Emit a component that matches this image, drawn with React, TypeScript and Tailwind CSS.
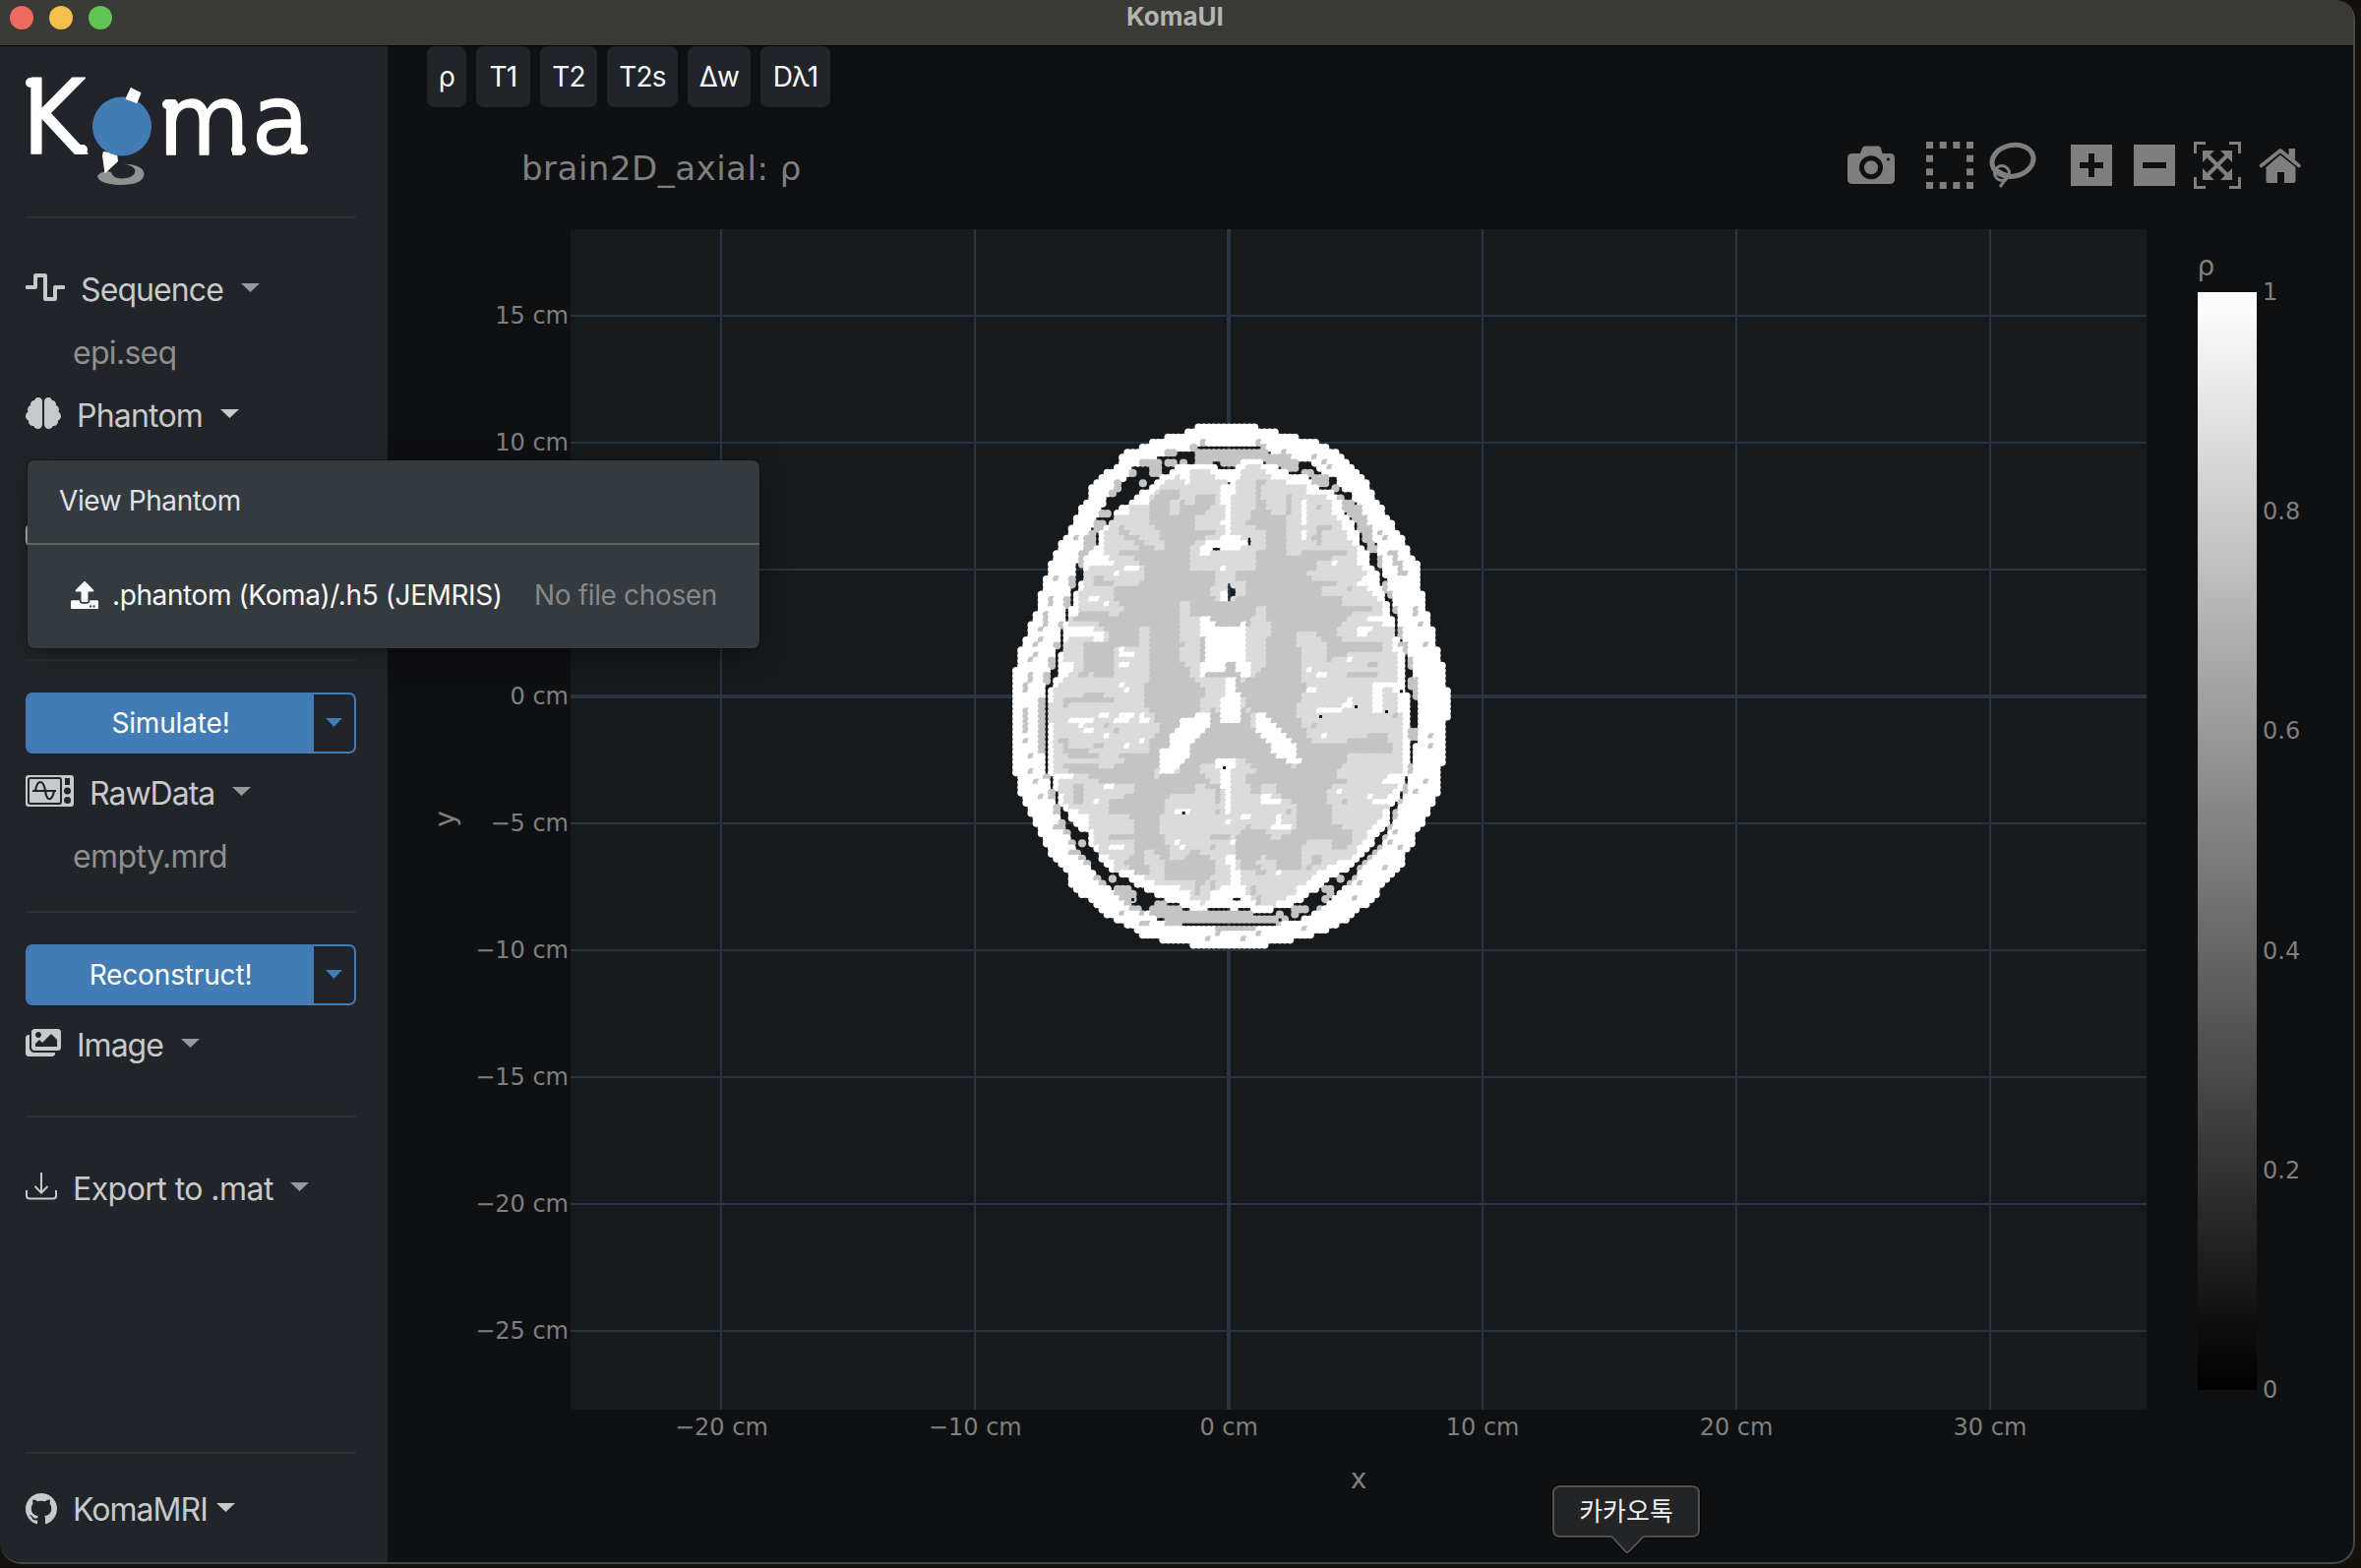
import React from "react";
import { FaBrain, FaImages, FaUpload, FaWaveSquare } from "react-icons/fa";
import { BsGithub } from "react-icons/bs";

type Pt = [number, number];
type Shape = { tone: number; pts?: Pt[]; rects?: number[][] };

const parse = (s: string): Pt[] =>
  s.trim().split(/\s+/).map((p) => p.split(",").map(Number) as Pt);

const DARK = 0;
const WHITE = 1;
const GREY = 2;
const LIGHT = 3;
const TONES = ["none", "#ffffff", "#c4c4c4", "#dbdbdb"];

/* Tissue map, later shapes override earlier ones. */
const SHAPES: Shape[] = [
  {
    tone: WHITE,
    pts: parse(`646,63 836,63 838,78 898,80 900,95 960,95 962,110 1005,110 1030,125 1035,128 1060,140 1083,158 1113,185 1145,217 1175,250 1190,280 1207,310 1222,345 1252,375 1254,390 1268,404 1283,420 1300,455 1302,468 1330,500 1332,570 1347,576 1349,635 1362,640 1364,685 1378,688 1380,745 1392,748 1395,790 1410,795 1410,868 1424,870 1424,962 1410,965 1408,1098 1395,1100 1393,1180 1378,1190 1376,1212 1362,1225 1345,1265 1332,1290 1316,1300 1315,1345 1285,1368 1284,1395 1260,1420 1237,1440 1236,1460 1205,1475 1205,1492 1170,1525 1130,1560 1085,1590 1050,1605 1020,1616 990,1630 945,1632 945,1646 867,1648 867,1662 632,1662 630,1646 538,1646 535,1632 490,1630 460,1612 455,1600 410,1580 365,1553 360,1540 305,1505 275,1475 258,1456 258,1432 240,1415 210,1385 195,1370 195,1352 180,1340 178,1322 165,1318 163,1292 150,1285 150,1260 135,1255 133,1228 118,1225 118,1200 103,1195 103,1135 88,1130 88,808 103,805 103,748 118,745 118,715 134,712 136,670 150,668 150,640 165,638 165,578 180,575 181,532 196,528 197,485 212,482 212,452 228,450 230,420 258,405 260,375 275,372 288,342 290,315 320,300 322,265 350,240 380,210 412,180 430,158 445,142 475,140 477,127 505,125 507,110 552,108 554,95 612,94 614,79 646,78`),
  },
  {
    tone: DARK,
    pts: parse(`655,132 840,132 848,148 910,155 915,165 970,170 1020,190 1035,212 1075,228 1085,245 1115,268 1130,290 1155,315 1175,360 1187,390 1197,430 1207,460 1215,495 1228,540 1240,570 1250,600 1262,640 1272,690 1282,740 1302,765 1310,800 1310,850 1326,870 1326,1030 1310,1050 1308,1110 1296,1150 1280,1210 1265,1250 1250,1290 1235,1325 1215,1355 1190,1390 1160,1420 1130,1450 1100,1475 1060,1515 1020,1545 990,1570 940,1580 895,1598 600,1598 565,1582 530,1580 500,1555 455,1535 400,1495 370,1470 340,1440 300,1395 270,1355 248,1310 225,1260 213,1215 200,1165 185,1130 182,1070 165,1070 165,900 185,895 188,845 205,790 218,740 233,690 246,640 255,590 262,540 280,500 295,460 310,430 320,400 335,360 350,330 375,290 400,250 440,220 450,195 490,180 540,160 590,147 640,145`),
  },
  {
    tone: GREY,
    pts: parse(`650,140 842,140 880,155 940,165 960,185 955,205 925,205 895,190 850,178 785,178 770,190 740,190 700,175 690,190 655,190 645,172`),
  },
  { tone: GREY, pts: parse(`1095,295 1150,310 1170,345 1187,390 1202,455 1175,455 1155,400 1125,350 1095,330`) },
  { tone: GREY, pts: parse(`320,385 345,395 345,430 325,460 315,490 285,505 298,455`) },
  {
    tone: GREY,
    pts: parse(`530,1526 600,1530 620,1552 820,1552 830,1568 890,1568 900,1552 930,1580 905,1600 890,1582 600,1582 600,1600 560,1598 555,1570 510,1558 505,1540`),
  },
  { tone: GREY, pts: parse(`395,1478 430,1472 450,1490 470,1510 450,1530 490,1548 490,1566 460,1550 420,1520`) },
  {
    tone: GREY,
    rects: [
      [165, 905, 17, 165], [118, 935, 15, 75], [118, 1025, 15, 18], [258, 530, 20, 38], [245, 595, 18, 30], [228, 670, 15, 18],
      [212, 732, 15, 16], [197, 780, 18, 32], [182, 828, 17, 24], [135, 828, 15, 28], [118, 850, 15, 38], [150, 765, 15, 15],
      [135, 780, 15, 15], [150, 735, 15, 15], [165, 718, 15, 15], [165, 685, 15, 15], [180, 645, 15, 45], [195, 596, 15, 28],
      [212, 532, 15, 16], [275, 408, 14, 15], [505, 190, 38, 32], [550, 148, 38, 16], [552, 172, 34, 18], [600, 174, 18, 15],
      [475, 180, 60, 12], [475, 236, 15, 15], [400, 240, 16, 28], [384, 265, 15, 20], [444, 198, 16, 26], [350, 322, 30, 24],
      [332, 358, 34, 30], [630, 130, 18, 16], [660, 115, 15, 14], [833, 115, 16, 14], [848, 130, 14, 14], [906, 148, 14, 14],
      [1002, 160, 14, 16], [1035, 176, 14, 16], [1048, 190, 14, 16], [970, 205, 36, 16], [1000, 220, 52, 30], [1064, 250, 18, 24],
      [1080, 282, 18, 20], [1205, 395, 14, 16], [1220, 410, 14, 14], [1233, 456, 30, 14], [1250, 472, 14, 32], [1266, 490, 14, 36],
      [1280, 518, 14, 14], [1202, 468, 14, 34], [1220, 545, 14, 28], [1233, 575, 14, 20], [1250, 622, 14, 22], [1265, 686, 14, 32],
      [1268, 732, 24, 26], [1310, 625, 15, 32], [1326, 670, 15, 16], [1342, 733, 15, 16], [1296, 785, 14, 20], [1295, 845, 25, 30],
      [1310, 870, 15, 32], [1295, 1000, 30, 30], [1295, 1102, 15, 30], [1280, 1160, 15, 30], [1265, 1205, 14, 18], [1250, 1235, 14, 30],
      [1358, 1012, 14, 16], [1358, 1044, 14, 14], [1342, 1150, 14, 16], [1310, 1183, 14, 14], [1234, 1285, 14, 20], [1204, 1290, 15, 16],
      [1250, 1306, 14, 14], [1234, 1336, 14, 14], [1218, 1320, 14, 20], [1204, 1350, 20, 14], [1264, 1352, 15, 15], [1188, 1366, 14, 16],
      [1172, 1382, 14, 14], [1157, 1398, 15, 14], [1142, 1412, 14, 15], [1127, 1445, 15, 20], [1142, 1460, 15, 15], [1080, 1442, 18, 15],
      [1035, 1475, 32, 20], [1110, 1458, 16, 16], [1050, 1490, 18, 16], [1035, 1505, 16, 16], [1020, 1535, 15, 16], [1218, 1415, 14, 15],
      [1126, 1505, 14, 15], [970, 1598, 15, 15], [940, 1538, 50, 16], [945, 1552, 16, 16], [182, 1132, 16, 16], [197, 1178, 15, 26],
      [213, 1226, 18, 28], [228, 1268, 20, 26], [212, 1290, 28, 15], [243, 1306, 15, 20], [258, 1332, 20, 22], [290, 1332, 20, 18],
      [262, 1368, 30, 14], [290, 1382, 20, 18], [305, 1398, 18, 16], [337, 1440, 18, 20], [352, 1458, 18, 15], [382, 1440, 18, 16],
      [415, 1470, 20, 20], [135, 1074, 15, 15], [135, 1122, 15, 14], [150, 1152, 15, 15], [165, 1198, 15, 15], [412, 1555, 15, 14],
      [475, 1586, 30, 14], [708, 1592, 120, 22], [708, 1612, 15, 15], [832, 1614, 15, 15], [678, 1630, 14, 16], [785, 1630, 14, 16],
      [120, 965, 12, 30],
    ],
  },
  {
    tone: WHITE,
    pts: parse(`585,187 650,182 660,196 700,190 730,212 770,212 782,178 850,178 860,192 890,195 910,212 955,215 985,225 1000,245 1025,262 1060,270 1095,305 1100,340 1125,375 1145,405 1150,440 1170,460 1180,490 1197,520 1210,560 1225,605 1240,645 1252,690 1267,740 1283,765 1285,880 1300,900 1298,980 1298,1090 1283,1150 1268,1195 1240,1235 1236,1270 1215,1300 1180,1345 1145,1385 1120,1410 1080,1435 1040,1455 1010,1485 970,1510 935,1535 860,1545 820,1553 775,1553 775,1538 750,1538 683,1538 680,1553 630,1553 620,1535 595,1535 570,1520 540,1505 500,1490 460,1462 430,1440 390,1425 360,1390 330,1350 315,1305 285,1290 260,1255 240,1235 225,1185 210,1140 200,1100 198,880 228,830 228,765 245,755 247,690 260,650 270,625 288,570 305,540 305,500 320,465 350,430 352,395 382,370 398,345 428,315 470,285 500,262 520,240 555,220 575,205`),
  },
  {
    tone: LIGHT,
    pts: parse(`630,200 690,200 700,225 738,235 722,265 722,300 738,330 738,350 722,362 738,385 738,400 700,430 675,428 662,440 662,468 690,460 705,452 752,455 770,450 785,432 800,430 785,405 752,400 752,285 768,275 770,240 785,225 785,205 820,190 850,192 875,220 900,240 950,250 985,255 985,280 1010,285 1045,285 1062,310 1062,330 1095,360 1095,380 1110,405 1140,440 1140,480 1170,515 1160,540 1145,550 1200,590 1215,620 1215,645 1175,660 1190,675 1250,680 1250,755 1265,770 1268,855 1190,860 1190,930 1205,940 1220,870 1255,870 1265,930 1280,960 1280,1130 1235,1140 1220,1155 1265,1175 1250,1200 1205,1210 1230,1235 1220,1270 1190,1290 1175,1320 1130,1380 1110,1400 1065,1405 1045,1430 1020,1430 1010,1450 960,1480 945,1465 960,1500 930,1510 880,1540 820,1520 800,1480 770,1430 765,1390 740,1400 755,1425 750,1475 720,1490 680,1530 630,1525 625,1485 580,1480 540,1480 500,1455 480,1435 430,1430 400,1425 390,1390 360,1375 340,1340 320,1260 260,1230 230,1180 225,1150 270,1148 270,1135 215,1135 212,1000 200,960 215,880 245,855 270,830 270,800 245,780 245,755 262,720 262,710 320,710 350,735 380,720 340,690 270,680 262,660 290,645 290,600 305,570 305,540 320,505 395,500 395,480 370,465 370,400 395,350 440,345 445,315 500,310 520,280 555,245 600,225 615,240 640,268 628,235`),
  },
  {
    tone: GREY,
    pts: parse(`537,275 598,270 600,300 650,318 645,290 700,290 705,312 660,345 645,350 645,392 705,395 705,408 655,420 632,450 630,500 650,518 708,518 708,545 692,570 692,590 722,612 770,600 800,580 800,550 770,545 768,518 830,515 832,458 862,450 862,400 830,380 800,375 815,345 830,320 832,240 860,240 848,265 848,310 880,345 922,342 924,288 938,288 940,340 925,365 925,468 955,468 985,455 1110,457 1110,470 1020,480 1030,500 990,515 985,530 1030,545 1080,540 1080,560 1035,565 1035,590 1095,595 1100,625 1185,627 1185,642 1125,642 1095,670 1080,700 1110,735 1215,737 1215,757 1120,757 1110,770 1060,790 1048,790 1045,725 1020,720 1015,695 955,695 955,710 972,770 970,810 985,870 970,905 955,955 985,1000 1005,1040 1090,1045 1125,1030 1240,1000 1245,1070 1120,1065 1110,1090 1080,1120 1080,1145 1110,1150 1115,1157 1070,1160 1050,1190 1060,1240 1062,1290 1125,1300 1130,1330 1110,1360 1080,1370 1040,1330 1000,1330 970,1360 965,1430 900,1425 880,1395 850,1385 835,1410 870,1440 860,1470 830,1430 790,1420 770,1390 775,1330 790,1300 830,1270 850,1300 880,1300 850,1230 820,1180 790,1130 830,1130 800,1090 660,1105 660,1130 720,1170 720,1240 700,1180 650,1160 640,1200 570,1190 550,1240 540,1290 560,1350 610,1400 640,1360 700,1390 710,1440 680,1455 660,1500 640,1500 660,1455 555,1458 550,1400 520,1370 490,1370 505,1435 470,1440 430,1410 470,1350 455,1310 475,1270 380,1255 385,1215 460,1210 460,1165 340,1155 330,1142 270,1130 240,1115 245,1100 400,1115 430,1095 415,1075 500,1070 510,1040 535,1010 530,960 490,920 505,840 505,690 475,690 475,740 455,745 380,735 380,700 370,680 275,665 275,655 410,655 425,630 400,600 395,570 440,565 490,550 505,510 485,500 480,480 415,467 415,455 530,455 550,450 550,420 500,350 510,345 510,300`),
  },
  {
    tone: GREY,
    rects: [
      [412, 378, 22, 18], [420, 392, 34, 20], [438, 408, 34, 18], [455, 420, 34, 20], [470, 438, 50, 16], [1016, 375, 44, 14],
      [1016, 390, 16, 46], [1002, 406, 20, 15], [1016, 315, 16, 16], [335, 530, 32, 30], [365, 545, 30, 16], [305, 738, 92, 92],
      [290, 825, 30, 16], [258, 905, 138, 16], [245, 895, 18, 42], [310, 888, 60, 16], [340, 820, 60, 22], [245, 1045, 16, 30],
      [245, 1060, 72, 15], [260, 1075, 90, 18], [228, 1028, 30, 18], [275, 1168, 28, 56], [380, 1322, 78, 15], [430, 1200, 60, 60],
      [1110, 825, 92, 16], [1170, 795, 36, 15], [335, 1044, 30, 15], [370, 985, 14, 15], [398, 998, 14, 14], [1250, 948, 14, 15],
      [1002, 980, 14, 16], [1095, 1215, 14, 14], [708, 1245, 14, 14], [925, 1245, 14, 14], [678, 320, 16, 14], [680, 285, 26, 15],
      [415, 455, 70, 15], [290, 638, 90, 30], [695, 1320, 60, 15], [690, 1350, 22, 15], [815, 1480, 14, 30], [830, 1510, 14, 28],
      [1010, 1380, 20, 28], [985, 1405, 18, 20], [1110, 565, 14, 14], [700, 1460, 14, 30], [645, 1475, 14, 30], [845, 300, 14, 20],
    ],
  },
  {
    tone: LIGHT,
    pts: parse(`598,612 630,612 640,655 660,660 660,840 735,835 740,870 735,890 722,920 722,945 700,930 690,960 660,960 660,935 675,880 665,855 640,840 630,810 600,790 598,770 615,740 598,720`),
  },
  {
    tone: LIGHT,
    pts: parse(`845,615 862,615 862,650 878,690 862,740 862,790 845,830 800,845 785,870 800,930 845,960 830,1000 820,990 815,960 785,930 785,840 800,700 830,650`),
  },
  {
    tone: LIGHT,
    pts: parse(`845,1168 895,1172 910,1205 955,1230 955,1290 940,1325 880,1328 850,1300 815,1295 800,1280 830,1255 815,1225 820,1195 845,1190`),
  },
  {
    tone: LIGHT,
    rects: [
      [568, 302, 30, 42], [708, 545, 60, 40], [768, 565, 30, 28], [522, 1120, 16, 26], [585, 1110, 16, 22], [940, 1095, 16, 16],
      [815, 960, 15, 40], [660, 950, 30, 30], [830, 1445, 60, 30], [640, 1340, 24, 30], [565, 1300, 45, 100], [1010, 1330, 50, 40],
      [870, 1390, 26, 30], [475, 700, 26, 100],
    ],
  },
  { tone: GREY, rects: [[925, 1245, 14, 14]] },
  {
    tone: WHITE,
    pts: parse(`660,655 690,660 710,680 740,690 770,685 800,672 800,780 815,800 815,840 785,840 770,800 735,800 735,830 700,825 665,840 660,810 675,790 680,720 660,700`),
  },
  { tone: WHITE, pts: parse(`738,840 768,840 770,870 785,900 785,980 722,980 722,920 738,890`) },
  { tone: WHITE, pts: parse(`600,965 630,965 650,955 690,950 690,985 675,1010 630,1045 630,1075 600,1110 585,1135 538,1135 538,1065 568,1050 570,1020 600,980`) },
  { tone: WHITE, pts: parse(`830,950 860,950 955,1045 970,1105 930,1100 890,1070 860,1030 830,1000`) },
  {
    tone: WHITE,
    rects: [
      [430, 500, 45, 18], [398, 515, 16, 15], [320, 594, 30, 16], [367, 610, 16, 15], [970, 300, 15, 75], [970, 390, 15, 34],
      [1064, 488, 15, 15], [722, 500, 15, 16], [722, 578, 18, 30], [245, 688, 78, 14], [320, 703, 30, 16], [350, 716, 16, 16],
      [413, 748, 15, 26], [428, 764, 30, 14], [413, 795, 30, 14], [1142, 685, 42, 22], [1142, 700, 28, 18], [1172, 656, 76, 14],
      [1110, 780, 15, 15], [985, 812, 15, 14], [1018, 826, 28, 14], [413, 858, 15, 15], [428, 874, 16, 14], [985, 874, 30, 14],
      [1203, 870, 15, 72], [1188, 935, 30, 14], [1018, 935, 80, 15], [1095, 920, 28, 15], [1110, 905, 14, 16], [258, 965, 78, 15],
      [290, 980, 16, 15], [305, 996, 30, 15], [352, 942, 28, 15], [398, 965, 44, 15], [413, 950, 46, 15], [475, 950, 16, 30],
      [490, 965, 15, 15], [365, 1012, 15, 15], [475, 1027, 15, 15], [428, 1042, 15, 15], [1033, 1014, 14, 15], [210, 1135, 62, 15],
      [367, 1168, 30, 15], [337, 1212, 14, 16], [722, 1105, 30, 78], [738, 1170, 15, 90], [708, 1090, 60, 26], [738, 1275, 15, 15],
      [752, 1335, 15, 18], [738, 1385, 30, 15], [752, 1398, 15, 18], [752, 1430, 30, 45], [722, 1475, 78, 18], [845, 1198, 30, 30],
      [875, 1213, 30, 18], [890, 1262, 15, 34], [878, 1294, 62, 15], [785, 1258, 30, 16], [583, 1243, 46, 15],
      [583, 1338, 16, 15], [598, 1352, 15, 15], [383, 1352, 44, 15], [1078, 1183, 14, 15], [1172, 1198, 20, 16], [1188, 1212, 30, 16],
      [892, 1430, 15, 15], [568, 1480, 40, 30], [690, 1490, 110, 60], [660, 435, 30, 30], [738, 405, 45, 40],
    ],
  },
  {
    tone: DARK,
    rects: [
      [742, 237, 14, 14], [804, 412, 12, 22], [697, 438, 24, 14], [742, 548, 14, 58], [755, 563, 14, 26], [762, 1498, 22, 18],
      [683, 1536, 66, 15], [776, 1536, 40, 15], [605, 1536, 22, 15], [574, 1520, 22, 14],
    ],
  },
];

const VOXEL_DOTS: Pt[] = [[1135, 925], [1027, 955], [1228, 940], [733, 1111], [609, 1249], [903, 1575], [454, 1513], [1273, 878]];

const inside = (x: number, y: number, pts: Pt[]) => {
  let hit = false;
  for (let i = 0, j = pts.length - 1; i < pts.length; j = i++) {
    const [xi, yi] = pts[i];
    const [xj, yj] = pts[j];
    if (yi > y !== yj > y && x < ((xj - xi) * (y - yi)) / (yj - yi) + xi) hit = !hit;
  }
  return hit;
};

const STEP_X = 15.45;
const STEP_Y = 15.47;

const buildRuns = () => {
  const runs: { d: string; tone: number }[] = [];
  for (let r = 0; r < 103; r++) {
    const y = 73.5 + r * STEP_Y;
    let start = 0;
    let last = -1;
    for (let c = 0; c <= 86; c++) {
      const x = 99.2 + c * STEP_X;
      let tone = 0;
      if (c < 86) {
        for (const s of SHAPES) {
          if (s.pts && inside(x, y, s.pts)) tone = s.tone;
          if (s.rects && s.rects.some(([rx, ry, w, h]) => x >= rx && x < rx + w && y >= ry && y < ry + h)) tone = s.tone;
        }
      }
      if (tone !== last) {
        if (last > 0) {
          const len = (c - 1 - start) * STEP_X + 0.2;
          runs.push({ d: `M${(99.2 + start * STEP_X).toFixed(2)} ${y.toFixed(2)}h${len.toFixed(2)}`, tone: last });
        }
        start = c;
        last = tone;
      }
    }
  }
  return runs;
};

const RUNS = buildRuns();

const Brain = () => (
  <g transform="translate(1000 410) scale(0.33333)">
    {RUNS.map((r, i) => (
      <path key={i} d={r.d} stroke={TONES[r.tone]} strokeWidth={24.5} strokeLinecap="round" strokeDasharray="0 15.45" fill="none" />
    ))}
    {VOXEL_DOTS.map(([x, y]) => (
      <rect key={`${x}-${y}`} x={x - 4} y={y - 4} width={9} height={9} fill="#161a1d" />
    ))}
  </g>
);

const X_TICKS = [-20, -10, 0, 10, 20, 30];
const Y_TICKS = [15, 10, 5, 0, -5, -10, -15, -20, -25];
const label = (n: number) => `${n < 0 ? "−" : ""}${Math.abs(n)} cm`;

const Plot = () => (
  <svg viewBox="395 220 1997 1367" width={1997} height={1367} className="block shrink-0" fontFamily="'DejaVu Sans', Verdana, sans-serif" fontSize={24} fill="#7f7f7f">
    <defs>
      <linearGradient id="scale" x1="0" y1="0" x2="0" y2="1">
        <stop offset="0" stopColor="#fff" />
        <stop offset="1" stopColor="#000" />
      </linearGradient>
    </defs>
    <rect x={580} y={233} width={1602} height={1200} fill="#161a1d" />
    {X_TICKS.map((t) => (
      <rect key={t} x={Math.round(1249.2 + t * 25.79) - (t === 0 ? 2 : 1)} y={233} width={t === 0 ? 4 : 2} height={1200} fill="#283442" />
    ))}
    {Y_TICKS.map((t) => (
      <rect key={t} x={580} y={Math.round(708 - t * 25.78) - (t === 0 ? 2 : 1)} width={1602} height={t === 0 ? 4 : 2} fill="#283442" />
    ))}
    {X_TICKS.map((t) => (
      <text key={t} x={1249.2 + t * 25.79} y={1458.5} textAnchor="middle">{label(t)}</text>
    ))}
    {Y_TICKS.map((t) => (
      <text key={t} x={578} y={716 - t * 25.78} textAnchor="end">{label(t)}</text>
    ))}
    <text x={1381} y={1513} textAnchor="middle" fontSize={28}>x</text>
    <text transform="translate(462 832.5) rotate(-90)" textAnchor="middle" fontSize={28}>y</text>
    <Brain />
    <rect x={2234} y={297} width={60} height={1116} fill="url(#scale)" />
    <text x={2233.5} y={280} fontSize={28}>ρ</text>
    {[1, 0.8, 0.6, 0.4, 0.2, 0].map((v) => (
      <text key={v} x={2300} y={1421 - v * 1116}>{v}</text>
    ))}
  </svg>
);

const box = "block h-12 w-12";

const ModeBar = () => (
  <div className="flex gap-8 text-[#7f7f7f]">
    <svg className={box} viewBox="0 0 48 48">
      <path fill="currentColor" fillRule="evenodd" d="M5 12h8l2-5.500q1-2 3-2h13q2 0 3 2l1.500 5.500H43q5 0 5 5v21q0 5-5 5H5q-5 0-5-5V17q0-5 5-5ZM24 14.300a12 12 0 1 0 0 24a12 12 0 1 0 0-24ZM41.400 16.300a1.600 1.600 0 1 0 0 3.200a1.600 1.600 0 1 0 0-3.200Z" />
      <circle cx={24} cy={26.300} r={7} fill="currentColor" />
    </svg>
    <div className="flex gap-4">
      <svg className={box} viewBox="0 0 48 48" fill="currentColor">
        {[0, 13.700, 27.300, 41].map((x) =>
          [0, 13.700, 27.300, 41].map((y) => (x % 41 === 0 || y % 41 === 0 ? <rect key={`${x}-${y}`} x={x} y={y} width={7} height={7} /> : null)),
        )}
      </svg>
      <svg className={box} viewBox="0 0 48 48" fill="none" stroke="currentColor">
        <ellipse cx={24} cy={19.300} rx={21.200} ry={15.800} strokeWidth={5} transform="rotate(-12 24 19.300)" />
        <circle cx={13} cy={32} r={7.500} strokeWidth={3} />
        <path d="M6 27q6 5 14 7q-3 4-9 12" strokeWidth={3} />
      </svg>
    </div>
    <div className="flex gap-4">
      <svg className={box} viewBox="0 0 48 48">
        <path fill="currentColor" fillRule="evenodd" d="M3 3h42v42H3ZM12 21v6h9v9h6v-9h9v-6h-9v-9h-6v9Z" />
      </svg>
      <svg className={box} viewBox="0 0 48 48">
        <path fill="currentColor" fillRule="evenodd" d="M3 3h42v42H3ZM12 21v6h24v-6Z" />
      </svg>
      <svg className={box} viewBox="0 0 48 48">
        <path fill="none" stroke="currentColor" strokeWidth={3} d="M1.500 12V1.500H12M36 1.500H46.500V12M46.500 36V46.500H36M12 46.500H1.500V36" />
        <path stroke="currentColor" strokeWidth={4} d="M13 13L35 35M35 13L13 35" />
        <path fill="currentColor" d="M9 9h12L9 21ZM39 9v12L27 9ZM39 39H27L39 27ZM9 39V27L21 39Z" />
      </svg>
      <svg className={box} viewBox="0 0 48 48">
        <path fill="none" stroke="currentColor" strokeWidth={3.600} strokeLinecap="round" strokeLinejoin="round" d="M4.500 24.500L24 9L43 24.500" />
        <path fill="currentColor" d="M24 13.500L39.500 26v14q0 2-2 2h-9.500V31h-7v11h-9.500q-2 0-2-2V26ZM32.500 7h6.500v12l-6.500-5Z" />
      </svg>
    </div>
  </div>
);

const Caret = ({ className }: { className: string }) => (
  <svg className={`block h-[9px] ${className}`} viewBox="0 0 19 9" preserveAspectRatio="none">
    <path d="M0 0h19L9.500 9Z" fill="currentColor" />
  </svg>
);

const Rule = () => <div className="h-0.5 w-[336px] shrink-0 bg-[#2d2e31]" />;

const Row = ({ icon, text, caretGap = "ml-[18px]", tracking, bright }: { icon: React.ReactNode; text: string; caretGap?: string; tracking: string; bright?: boolean }) => (
  <div className="flex h-16 shrink-0 items-center text-[32px] leading-[64px] text-[#c8c9ca]">
    {icon}
    <span className={`mt-[2px] ml-4 whitespace-nowrap ${tracking}`}>{text}</span>
    <Caret className={`w-[19px] ${caretGap} -mt-[3px] ${bright ? "text-[#c8c9ca]" : "text-[#97999b]"}`} />
  </div>
);

const FileName = ({ text, tracking }: { text: string; tracking: string }) => (
  <div className={`h-16 shrink-0 pt-px pl-12 text-[32px] leading-[64px] text-[#8e8f90] ${tracking}`}>{text}</div>
);

const SplitButton = ({ text, tracking }: { text: string; tracking: string }) => (
  <div className="flex h-[62px] w-[336px] shrink-0 overflow-hidden rounded-[7px] border-2 border-[#437cb4] text-[28px] leading-[58px]">
    <div className={`w-[291px] bg-[#437cb4] text-center text-white ${tracking}`}>{text}</div>
    <div className="flex flex-1 items-center justify-center">
      <Caret className="-mt-[2px] w-[17px] text-[#437cb4]" />
    </div>
  </div>
);

const Logo = () => (
  <svg width={300} height={173} viewBox="20 47 300 173" className="block" fontFamily="'DejaVu Sans', sans-serif">
    <g fill="#fff" stroke="#fff" strokeLinejoin="round" strokeLinecap="round">
      <text x={0} y={0} fontSize={100} strokeWidth={1.500} transform="translate(22.500 156) scale(0.980 1.060)">K</text>
      <text x={0} y={0} fontSize={100} strokeWidth={1.500} transform="translate(161 156.500) scale(0.950 0.990)">m</text>
      <text x={0} y={0} fontSize={100} strokeWidth={1.500} transform="translate(256 156) scale(0.940 0.980)">a</text>
      <path strokeWidth={10} d="M31 84h6M170 106h6M240 152h5M303 152h5M79 152h5" />
    </g>
    <path d="M126 166.500q20 1 20.500 10.500q-1 11-24.500 11q-22-1-23-9q2-4 10-5l4 1q2 7 12 6.500q12-1 12.500-8q-1-5-11.500-7Z" fill="#919191" />
    <path d="M105 154l14 2l1 8l-13.500 12.500L104 158Z" fill="#fff" />
    <circle cx={124} cy={128.500} r={30} fill="#437cb4" />
    <path d="M133 89.500l10 5-4 10-11-4Z" fill="#fff" stroke="#fff" strokeLinejoin="round" />
  </svg>
);

const Sidebar = () => (
  <aside className="flex w-[394px] shrink-0 flex-col bg-[#212529] pl-[26px]">
    <div className="-ml-1.5 h-[173px] shrink-0">
      <Logo />
    </div>
    <Rule />
    <div className="h-10 shrink-0" />
    <Row icon={<FaWaveSquare className="-mt-1 h-8 w-10" />} text="Sequence" tracking="tracking-[-0.9px]" />
    <FileName text="epi.seq" tracking="tracking-[-0.7px]" />
    <Row icon={<FaBrain className="-mt-1 h-8 w-9" />} text="Phantom" tracking="tracking-[-0.8px]" bright />
    <div className="h-16 shrink-0" />
    <div className="flex h-16 shrink-0 items-center">
      <div className="-mt-3 h-6 w-9 rounded-md border-4 border-[#c8c9ca]" />
    </div>
    <div className="h-[88px] shrink-0" />
    <Rule />
    <div className="h-8 shrink-0" />
    <SplitButton text="Simulate!" tracking="tracking-[-0.15px]" />
    <div className="h-2 shrink-0" />
    <Row
      icon={
        <svg viewBox="0 0 49 32" className="-mt-1 h-8 w-[49px]">
          <rect width={49} height={32} rx={3} fill="#c8c9ca" />
          <rect x={3} y={3} width={33} height={26} rx={2} fill="none" stroke="#212529" strokeWidth={2} />
          <path d="M7 16h24M10 16c2-12 8-12 10 0s7 10 9 0" fill="none" stroke="#212529" strokeWidth={2.200} />
          <rect x={40} y={3} width={5} height={7} fill="#212529" />
          <circle cx={42.500} cy={16} r={3.500} fill="#212529" />
          <circle cx={42.500} cy={25.500} r={3.500} fill="#212529" />
        </svg>
      }
      text="RawData"
      tracking="tracking-[-1px]"
    />
    <FileName text="empty.mrd" tracking="tracking-[-0.6px]" />
    <div className="h-6 shrink-0" />
    <Rule />
    <div className="h-8 shrink-0" />
    <SplitButton text="Reconstruct!" tracking="tracking-[-0.15px]" />
    <div className="h-2 shrink-0" />
    <Row icon={<FaImages className="-mt-1 h-8 w-9" />} text="Image" tracking="tracking-[-1px]" />
    <div className="h-10 shrink-0" />
    <Rule />
    <div className="h-10 shrink-0" />
    <Row
      icon={
        <svg viewBox="0 0 32 32" className="-mt-1 h-8 w-8" fill="none" stroke="#c8c9ca" strokeWidth={2}>
          <path d="M1 20v5.500q0 3 3 3h24q3 0 3-3V20M16 2v20M9.500 16l6.500 6.500l6.500-6.500" />
        </svg>
      }
      text="Export to .mat"
      caretGap="ml-[17px]"
      tracking="tracking-[-0.55px]"
    />
    <div className="h-[236px] shrink-0" />
    <Rule />
    <div className="h-6 shrink-0" />
    <Row icon={<BsGithub className="h-8 w-8" />} text="KomaMRI" caretGap="ml-[9px]" tracking="tracking-[-0.95px]" bright />
  </aside>
);

const Tab = ({ w, children }: { w: string; children: React.ReactNode }) => (
  <button className={`${w} h-[62px] rounded-lg bg-[#212529] text-center text-[28px] leading-[63px] tracking-[-0.8px] text-[#f8f9fa]`}>{children}</button>
);

const PhantomMenu = () => (
  <div className="absolute top-[468px] left-7 h-[191px] w-[744px] rounded-[7px] bg-[#343a3e] shadow-[0_8px_30px_rgba(0,0,0,0.35)] ring-1 ring-black/25">
    <div className="h-[84px] pl-8 text-[28px] leading-[82px] tracking-[-0.4px] text-[#dee2e6]">View Phantom</div>
    <div className="h-0.5 bg-[#5d6466]" />
    <div className="flex h-[102px] items-center pl-11 text-[28px] text-[#f8f9fa]">
      <FaUpload className="h-7 w-7" />
      <span className="ml-[14px] w-[402px] whitespace-nowrap tracking-[-0.4px]">.phantom (Koma)/.h5 (JEMRIS)</span>
      <span className="ml-[27px] whitespace-nowrap tracking-[-0.35px] text-[#84888a]">No file chosen</span>
    </div>
  </div>
);

const DockLabel = () => (
  <div className="absolute top-[1509px] left-[1577px] h-[70px] w-[152px]">
    <svg width={152} height={70} className="absolute inset-0">
      <path d="M9 2h134q7 0 7 7v37q0 7-7 7H96q-4 0-6 4l-11 11q-2 2-4 0L65 57q-2-4-6-4H9q-7 0-7-7V9q0-7 7-7Z" fill="#232426" stroke="#000" strokeWidth={4} />
      <path d="M9 2h134q7 0 7 7v37q0 7-7 7H96q-4 0-6 4l-11 11q-2 2-4 0L65 57q-2-4-6-4H9q-7 0-7-7V9q0-7 7-7Z" fill="#232426" stroke="#505153" strokeWidth={2} />
    </svg>
    <div className="relative text-center font-['Noto_Sans_CJK_KR',sans-serif] text-[26px] leading-[52px] text-[#eeeeee]">카카오톡</div>
  </div>
);

export default function App() {
  return (
    <div className="relative h-[1594px] w-[2400px] overflow-hidden bg-[#14110d] font-['Inter',sans-serif]">
      <div className="flex h-[1590px] w-[2394px] flex-col overflow-hidden rounded-tr-[20px] rounded-b-[22px] border-r-2 border-b-2 border-[#47484a] bg-[#0f1012]">
        <header className="relative flex h-[47px] shrink-0 items-start border-b border-black bg-[#3a3a37] pt-1.5 pl-2.5">
          <div className="flex gap-4">
            <span className="h-6 w-6 rounded-full bg-[#ed6a5f]" />
            <span className="h-6 w-6 rounded-full bg-[#f5bf4f]" />
            <span className="h-6 w-6 rounded-full bg-[#61c555]" />
          </div>
          <div className="-ml-[117px] flex-1 text-center text-[26px] leading-[22px] font-bold text-[#b4b4b2]">KomaUI</div>
        </header>
        <div className="flex flex-1">
          <Sidebar />
          <main className="flex flex-1 flex-col pl-px">
            <div className="flex h-[97px] gap-2.5 pl-[39px]">
              <Tab w="w-10">ρ</Tab>
              <Tab w="w-[55px]">T1</Tab>
              <Tab w="w-[58px]">T2</Tab>
              <Tab w="w-[72px]">T2s</Tab>
              <Tab w="w-16">Δw</Tab>
              <Tab w="w-[71px]">Dλ1</Tab>
            </div>
            <div className="flex h-[76px] items-start justify-between pr-[50px] pl-[135px]">
              <h1 className="pt-[7px] font-['DejaVu_Sans',sans-serif] text-[34px] leading-[40px] tracking-[0.5px] text-[#7f7f7f]">brain2D_axial: ρ</h1>
              <ModeBar />
            </div>
            <Plot />
          </main>
        </div>
      </div>
      <PhantomMenu />
      <DockLabel />
    </div>
  );
}
